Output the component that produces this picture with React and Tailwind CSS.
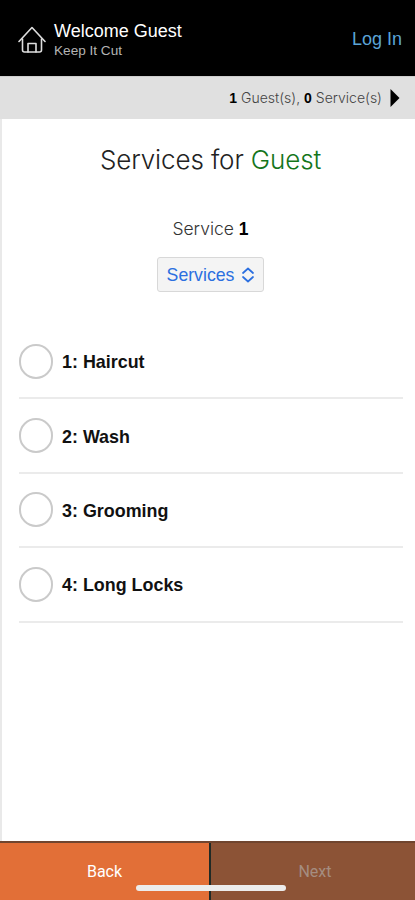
import React, { useState } from 'react';

const services = ['Haircut', 'Wash', 'Grooming', 'Long Locks'];

const HomeIcon = () => (
  <svg width="28" height="28" viewBox="0 0 28 28" fill="none" stroke="#dedede" strokeWidth="1.6" strokeLinejoin="round" strokeLinecap="round">
    <path d="M1 15.500 14 1.500 27 15.500" />
    <path d="M4.500 13V24q0 2 2 2h15q2 0 2-2V13" />
    <path d="M10 26V17.500h8V26" />
  </svg>
);

const App = () => {
  const [selected, setSelected] = useState(null);

  return (
    <div className="relative flex h-[900px] w-[415px] flex-col overflow-hidden bg-white font-['Liberation_Sans',sans-serif] text-black">
      {/* Header */}
      <header className="flex h-[76px] shrink-0 items-start bg-black pl-[18px] pr-[13px]">
        <div className="mt-[26px]">
          <HomeIcon />
        </div>
        <div className="ml-2 mt-5">
          <h1 className="text-[18px] leading-[22px] text-white">Welcome Guest</h1>
          <p className="text-[13.6px] leading-[18px] text-[#b4b4b4]">Keep It Cut</p>
        </div>
        <button className="ml-auto mt-7 text-[18px] leading-[22px] text-[#5ba4d6]">Log In</button>
      </header>

      {/* Summary bar */}
      <div className="flex h-[43px] shrink-0 items-center justify-end border-t border-[#cfcfcf] bg-[#e0e0e0] pr-[15px]">
        <p className="font-['Inter',sans-serif] text-[14px] font-light text-[#444]">
          <b className="font-['Liberation_Sans',sans-serif] font-bold text-black">1</b> Guest(s),{' '}
          <b className="font-['Liberation_Sans',sans-serif] font-bold text-black">0</b> Service(s)
        </p>
        <svg className="ml-2" width="10" height="18" viewBox="0 0 10 18">
          <path d="M0.500 0v18L9.500 9z" fill="#000" />
        </svg>
      </div>

      {/* Content */}
      <main className="flex flex-1 flex-col border-l-2 border-[#e9e9e9] pl-[17px] pr-3">
        <div className="flex flex-col items-center pr-[1px]">
          <h2 className="mt-[25px] font-['Inter',sans-serif] text-[26px] font-light leading-8 tracking-[-0.12px] text-[#222]">
            Services for <span className="text-[#14751b]">Guest</span>
          </h2>
          <p className="mt-[41px] font-['Inter',sans-serif] text-[17.5px] font-light leading-6 text-[#333]">
            Service <b className="font-['Liberation_Sans',sans-serif] font-bold text-black">1</b>
          </p>
          <button className="mt-4 flex h-[35px] w-[107px] items-center justify-center gap-2 rounded-[3px] border border-[#d8d8d8] bg-[#f4f4f4] pt-[1px] text-[17.7px] text-[#2b6fe0]">
            Services
            <svg width="12" height="16" viewBox="0 0 12 16" fill="none" stroke="currentColor" strokeWidth="1.7" strokeLinecap="round" strokeLinejoin="round">
              <path d="M1 6 6 1.500 11 6M1 10 6 14.500 11 10" />
            </svg>
          </button>
        </div>

        <ul className="mt-[33px]">
          {services.map((service, index) => (
            <li
              key={service}
              onClick={() => setSelected(index)}
              className="flex h-[74.4px] cursor-pointer items-center border-b-2 border-[#ebebeb]"
            >
              <span className={`h-[35px] w-[34px] rounded-full border-2 border-[#cacaca] ${selected === index ? 'bg-[#e26f37]' : ''}`} />
              <span className="ml-[9px] pt-[3px] text-[17.9px] font-bold text-[#111]">{index + 1}: {service}</span>
            </li>
          ))}
        </ul>
      </main>

      {/* Footer */}
      <footer className="flex h-[59px] shrink-0 border-t-2 border-[#70452f] font-['Roboto',sans-serif] text-[16px]">
        <button className="w-[209px] bg-[#e26f37] text-white">Back</button>
        <div className="w-[2px] bg-[#202a26]" />
        <button className="flex-1 bg-[#8c5336] pl-1 text-[#a58d80]">Next</button>
      </footer>
      <div className="absolute bottom-[9px] left-[136px] h-[6px] w-[150px] rounded-full bg-[#ececec]" />
    </div>
  );
};

export default App;
